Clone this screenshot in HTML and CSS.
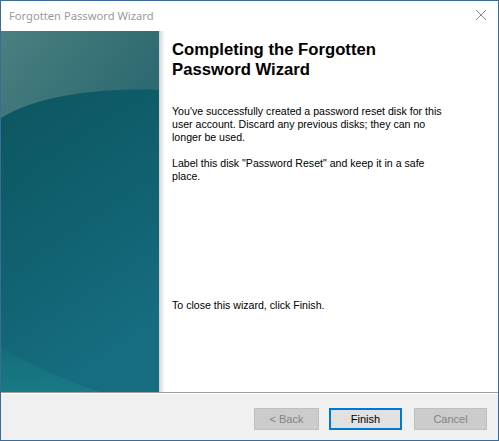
FILE: index.html
```html
<!DOCTYPE html>
<html>
<head>
<meta charset="utf-8">
<link rel="stylesheet" href="styles.css">
</head>
<body>
<div class="window">
  <div class="titlebar">
    <span class="title">Forgotten Password Wizard</span>
    <svg class="close" width="12" height="12" viewBox="0 0 12 12"><path d="M1 1 L11 11 M11 1 L1 11" stroke="#8a8a8a" stroke-width="1" fill="none"/></svg>
  </div>
  <div class="main">
    <div class="banner">
      <svg width="158" height="361" viewBox="0 0 158 361" preserveAspectRatio="none">
        <defs>
          <linearGradient id="bg" x1="0" y1="0" x2="0.3" y2="1">
            <stop offset="0" stop-color="#0b525c"/>
            <stop offset="0.5" stop-color="#0f5e6b"/>
            <stop offset="1" stop-color="#166c80"/>
          </linearGradient>
          <linearGradient id="top" x1="0" y1="0" x2="1" y2="0.4">
            <stop offset="0" stop-color="#4a807f"/>
            <stop offset="1" stop-color="#2e6a72"/>
          </linearGradient>
          <linearGradient id="low" x1="0" y1="0" x2="0" y2="1">
            <stop offset="0" stop-color="#13707a"/>
            <stop offset="1" stop-color="#1a7f88"/>
          </linearGradient>
        </defs>
        <rect width="158" height="361" fill="url(#bg)"/>
        <path d="M0 0 H158 V59 C110 57 40 62 0 87 Z" fill="url(#top)"/>
        <path d="M0 316 C30 335 70 352 100 361 H0 Z" fill="url(#low)" opacity="0.7"/>
      </svg>
    </div>
    <div class="shadow"></div>
    <div class="content">
      <h1 class="heading">Completing the Forgotten Password Wizard</h1>
      <p class="para">You've successfully created a password reset disk for this user account. Discard any previous disks; they can no longer be used.</p>
      <p class="para">Label this disk "Password Reset" and keep it in a safe place.</p>
      <p class="para closing">To close this wizard, click Finish.</p>
    </div>
  </div>
  <div class="separator"></div>
  <div class="footer">
    <button class="btn btn-back" disabled>&lt; Back</button>
    <button class="btn btn-finish">Finish</button>
    <button class="btn btn-cancel" disabled>Cancel</button>
  </div>
</div>
</body>
</html>
```

FILE: styles.css
```css
* { box-sizing: border-box; }
html, body { margin: 0; padding: 0; background: #ffffff; }
.window {
  width: 499px;
  height: 441px;
  border: 1px solid #3b6c98;
  display: flex;
  flex-direction: column;
  background: #ffffff;
  overflow: hidden;
}
.titlebar {
  height: 30px;
  display: flex;
  align-items: center;
  justify-content: space-between;
  padding: 0 11px 0 8px;
  background: #ffffff;
}
.title {
  font-family: "Noto Sans", "Open Sans", sans-serif;
  font-size: 11.2px;
  color: #9a9a9a;
  padding-bottom: 1px;
}
.close { display: block; margin-top: -2px; }
.main {
  height: 361px;
  display: flex;
}
.banner { width: 158px; height: 361px; flex: none; }
.banner svg { display: block; }
.shadow {
  width: 6px;
  flex: none;
  background: linear-gradient(to right, #cfcfcf, #e6e6e6 40%, #ffffff);
}
.content {
  flex: 1;
  display: flex;
  flex-direction: column;
  padding: 9px 20px 80px 7px;
  font-family: "Liberation Sans", Arial, sans-serif;
  color: #000000;
}
.heading {
  margin: 0;
  font-size: 16.7px;
  font-weight: bold;
  line-height: 20px;
  width: 240px;
}
.para {
  margin: 13px 0 0 0;
  font-size: 10.6px;
  line-height: 13px;
  width: 280px;
}
.heading + .para { margin-top: 25px; }
.closing { margin-top: auto; }
.separator {
  height: 2px;
  border-top: 1px solid #a0a0a0;
  border-bottom: 1px solid #ffffff;
}
.footer {
  flex: 1;
  background: #f0f0f0;
  display: flex;
  padding: 14px 11px 0 0;
  justify-content: flex-end;
  align-items: flex-start;
}
.btn {
  height: 22px;
  width: 73px;
  font-family: "Liberation Sans", Arial, sans-serif;
  font-size: 11px;
  padding: 0;
  margin: 0;
  border: 1px solid #adadad;
  background: #e1e1e1;
  color: #000000;
}
.btn[disabled] {
  background: #cccccc;
  border-color: #bfbfbf;
  color: #838383;
}
.btn-back { width: 65px; margin-right: 10px; }
.btn-finish { border: 2px solid #0078d7; margin-right: 12px; }
```
